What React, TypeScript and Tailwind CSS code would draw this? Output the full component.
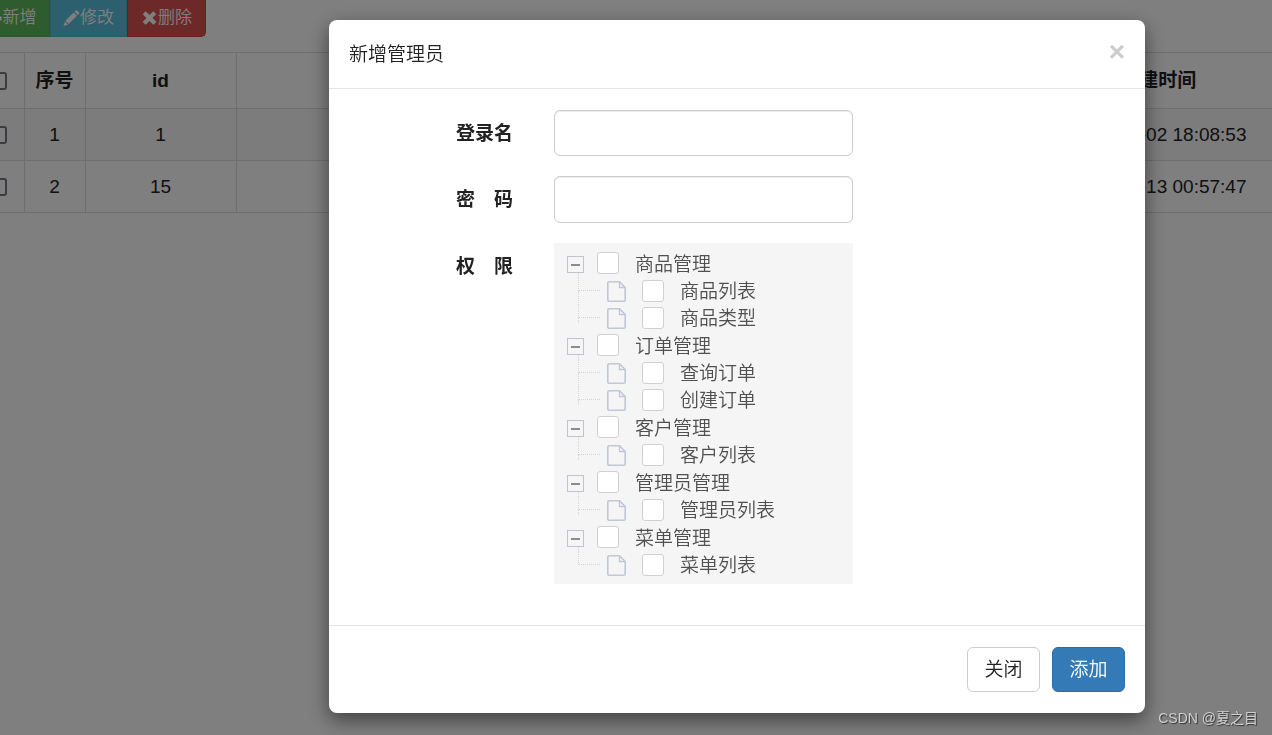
import { useState } from 'react';

const SANS = "font-['Liberation_Sans','Noto_Sans_CJK_SC',sans-serif]";

const MENU = [
  { name: '商品管理', children: ['商品列表', '商品类型'] },
  { name: '订单管理', children: ['查询订单', '创建订单'] },
  { name: '客户管理', children: ['客户列表'] },
  { name: '管理员管理', children: ['管理员列表'] },
  { name: '菜单管理', children: ['菜单列表'] },
];

const ADMINS = [
  { no: 1, id: 1, createTime: '2022-08-02 18:08:53' },
  { no: 2, id: 15, createTime: '2022-08-13 00:57:47' },
];

function PlusIcon() {
  return (
    <svg width="17" height="17" viewBox="0 0 17 17" fill="currentColor" aria-hidden="true">
      <path d="M6.500 1.500h4v5H15.500v4h-5v5h-4v-5h-5v-4h5z" />
    </svg>
  );
}

function PencilIcon() {
  return (
    <svg width="17" height="17" viewBox="0 0 17 17" fill="currentColor" aria-hidden="true">
      <path d="M12.800.5a.9.9 0 0 1 1.300 0l2 2a.9.9 0 0 1 0 1.300l-1.200 1.200-3.300-3.300zM10.700 2.500l3.300 3.300-8.300 8.300-3.300-3.300zM1.800 11.500l3.200 3.200L.5 16.100z" />
    </svg>
  );
}

function RemoveIcon() {
  return (
    <svg width="17" height="17" viewBox="0 0 17 17" fill="currentColor" aria-hidden="true">
      <path d="M5 1.600l3.500 3.500 3.500-3.500a.5.5 0 0 1 .7 0l2.300 2.300a.5.5 0 0 1 0 .7L11.500 8.100l3.500 3.500a.5.5 0 0 1 0 .7l-2.300 2.300a.5.5 0 0 1-.7 0L8.500 11.100 5 14.600a.5.5 0 0 1-.7 0L2 12.300a.5.5 0 0 1 0-.7l3.500-3.500L2 4.600a.5.5 0 0 1 0-.7l2.300-2.300a.5.5 0 0 1 .7 0z" />
    </svg>
  );
}

function FileIcon() {
  return (
    <svg width="19" height="21" viewBox="0 0 19 21" fill="none" stroke="#c2c7d6" aria-hidden="true">
      <path d="M2 .8h10.500l5.700 5.700v12.500a1.200 1.200 0 0 1-1.200 1.200H2a1.200 1.200 0 0 1-1.200-1.200V2A1.200 1.200 0 0 1 2 .8z" strokeWidth="1.600" />
      <path d="M12.500.8v5.700h5.700" strokeWidth="1.300" />
    </svg>
  );
}

function RowCheck({ label }: { label: string }) {
  return (
    <input type="checkbox" aria-label={label}
      className="block mx-auto size-[18px] appearance-none rounded-[3px] border-2 border-[#767680] bg-white" />
  );
}

function TreeCheck({ label, pad }: { label: string; pad: string }) {
  return (
    <label className="flex items-center gap-4">
      <input type="checkbox"
        className={`${pad} size-[22px] shrink-0 appearance-none rounded-[3px] border border-[#d0d0d0] bg-white checked:bg-[#337ab7]`} />
      <span className="pt-0.5">{label}</span>
    </label>
  );
}

function PermissionTree() {
  const [closed, setClosed] = useState<string[]>([]);
  const toggle = (name: string) =>
    setClosed(c => (c.includes(name) ? c.filter(n => n !== name) : [...c, name]));

  return (
    <ul className="bg-[#f5f5f5] pt-[7px] pb-[5px] pl-[13px] font-[350] text-[#505050]">
      {MENU.map((group, g) => (
        <li key={group.name}>
          <div className="flex h-7">
            <div className="mr-[13px] flex w-[17px] flex-col pt-1.5">
              <button type="button" aria-label={group.name} onClick={() => toggle(group.name)}
                className="flex h-[17px] w-[17px] shrink-0 items-center justify-center border border-[#bfc4cf]">
                <span className="h-0.5 w-[9px] bg-[#8c8c8c]" />
              </button>
              <span className="ml-[11px] h-[5px] border-l border-dotted border-[#d4d4d4]" />
            </div>
            <TreeCheck label={group.name} pad="-mt-0.5" />
          </div>
          {!closed.includes(group.name) && (
            <ul className="pl-[11px]">
              {group.children.map((child, i) => {
                const last = i === group.children.length - 1;
                const tail = !last ? 'h-[14px]' : g < MENU.length - 1 ? 'h-[5px]' : 'hidden';
                return (
                  <li key={child} className="flex h-[27px]">
                    <div className="mr-[7px] w-[22px]">
                      <div className="h-[13px] border-b border-l border-dotted border-[#d4d4d4]" />
                      <div className={`${tail} border-l border-dotted border-[#d4d4d4]`} />
                    </div>
                    <div className="mr-4 flex items-center">
                      <FileIcon />
                    </div>
                    <TreeCheck label={child} pad="-mt-px" />
                  </li>
                );
              })}
            </ul>
          )}
        </li>
      ))}
    </ul>
  );
}

function AdminPage() {
  return (
    <div className="-ml-7">
      <div className="flex text-[17px] font-[350] leading-6 text-white">
        <button type="button" className="flex h-[37px] w-[78px] items-center justify-center border border-t-0 border-[#4cae4c] bg-[#5cb85c]">
          <PlusIcon />新增
        </button>
        <button type="button" className="flex h-[37px] w-[77px] items-center justify-center border border-t-0 border-[#46b8da] bg-[#5bc0de]">
          <PencilIcon />修改
        </button>
        <button type="button" className="flex h-[37px] w-[79px] items-center justify-center rounded-br-[5px] border border-t-0 border-[#d43f3a] bg-[#d9534f]">
          <RemoveIcon />删除
        </button>
      </div>
      <table className="mt-[15px] w-full table-fixed border-collapse border-y border-[#ddd] text-center text-[19px]">
        <colgroup>
          <col className="w-[52px]" />
          <col className="w-[61px]" />
          <col className="w-[151px]" />
          <col />
          <col className="w-[228px]" />
        </colgroup>
        <thead>
          <tr className="h-14 border-b border-[#ddd]">
            <th className="border-r border-[#ddd]"><RowCheck label="全选" /></th>
            <th className="border-r border-[#ddd] pt-0.5">序号</th>
            <th className="border-r border-[#ddd] pt-0.5">id</th>
            <th className="border-r border-[#ddd]" />
            <th className="pt-0.5">创建时间</th>
          </tr>
        </thead>
        <tbody>
          {ADMINS.map(row => (
            <tr key={row.id} className="h-[52px] border-b border-[#ddd] odd:bg-[#f9f9f9]">
              <td className="border-r border-[#ddd]"><RowCheck label={`选择 ${row.id}`} /></td>
              <td className="border-r border-[#ddd] pt-px">{row.no}</td>
              <td className="border-r border-[#ddd] pt-px">{row.id}</td>
              <td className="border-r border-[#ddd]" />
              <td className="whitespace-nowrap pt-px">{row.createTime}</td>
            </tr>
          ))}
        </tbody>
      </table>
    </div>
  );
}

function AddAdminModal() {
  const field = 'w-full rounded-md border border-[#ccc] bg-white px-4 shadow-[inset_0_1px_1px_rgba(0,0,0,0.075)] outline-none';
  const label = 'h-[46px] text-right font-bold leading-[48px]';

  return (
    <form role="dialog" aria-labelledby="modal-title" onSubmit={e => e.preventDefault()}
      className="w-full max-w-[816px] rounded-lg bg-white shadow-[0_7px_20px_rgba(0,0,0,0.5)]">
      <div className="flex h-[69px] items-center justify-between border-b border-[#e5e5e5] px-5">
        <h4 id="modal-title" className="pt-0.5 font-[350]">新增管理员</h4>
        <button type="button" aria-label="关闭" className="pb-1 text-[28px] font-bold leading-7 text-[#ccc]">×</button>
      </div>
      <div className="grid grid-cols-[184px_299px] gap-x-[41px] gap-y-5 pt-[21px] pb-[41px]">
        <label htmlFor="login-name" className={label}>登录名</label>
        <input id="login-name" type="text" className={`${field} h-[46px]`} />
        <label htmlFor="password" className={label}>密　码</label>
        <input id="password" type="password" className={`${field} h-[47px]`} />
        <span className={label}>权　限</span>
        <PermissionTree />
      </div>
      <div className="flex justify-end gap-3 border-t border-[#e5e5e5] px-5 py-[21px]">
        <button type="button" className="h-[45px] w-[73px] rounded-md border border-[#ccc] bg-white pt-0.5 font-[350]">关闭</button>
        <button type="submit" className="h-[45px] w-[73px] rounded-md border border-[#2e6da4] bg-[#337ab7] pt-0.5 font-[350] text-white">添加</button>
      </div>
    </form>
  );
}

export default function App() {
  return (
    <div className={`${SANS} min-h-screen overflow-x-hidden bg-white text-[19px] text-[#222]`}>
      <AdminPage />
      <div className="fixed inset-0 flex items-start justify-end overflow-y-auto bg-black/50 pt-5 pr-[127px]">
        <AddAdminModal />
      </div>
      <span className="fixed right-3.5 bottom-1.5 text-[14px] text-[#d0d0d0] [text-shadow:1px_1px_1px_#333]">CSDN @夏之目</span>
    </div>
  );
}
